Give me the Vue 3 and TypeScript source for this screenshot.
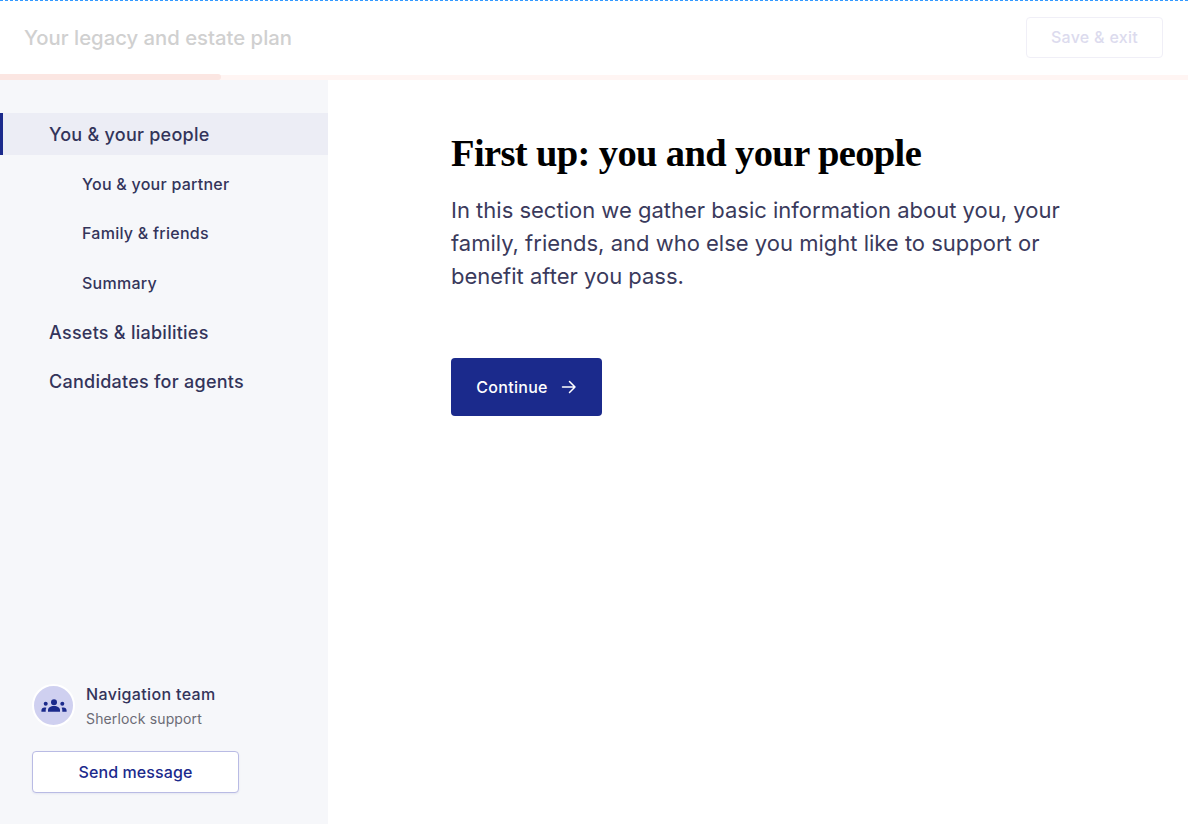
<script setup lang="ts">
interface NavItem { label: string; sub?: boolean; active?: boolean }
const items: NavItem[] = [
  { label: 'You & your people', active: true },
  { label: 'You & your partner', sub: true },
  { label: 'Family & friends', sub: true },
  { label: 'Summary', sub: true },
  { label: 'Assets & liabilities' },
  { label: 'Candidates for agents' },
]
</script>

<template>
  <div class="page">
    <header class="top">
      <span class="plan">Your legacy and estate plan</span>
      <button class="save">Save &amp; exit</button>
    </header>
    <div class="track"><div class="fill"></div></div>
    <div class="body">
      <aside class="side">
        <nav class="nav">
          <a v-for="i in items" :key="i.label" class="item" :class="{ sub: i.sub, active: i.active }">{{ i.label }}</a>
        </nav>
        <div class="team">
          <div class="who">
            <div class="avatar">
              <svg width="26" height="14" viewBox="0 0 26 14" fill="#1b2a8c">
                <circle cx="13" cy="3.200" r="3"/>
                <circle cx="4.700" cy="4.800" r="2"/>
                <circle cx="21.300" cy="4.800" r="2"/>
                <path d="M7 12.800v-1.500c0-2.600 2.400-4.300 6-4.300s6 1.700 6 4.300v1.500z"/>
                <path d="M.4 12.800v-1.200c0-2 1.400-3.200 3-3.200.8 0 1.500.1 2 .4-.5.8-.7 1.800-.7 2.800v1.200z"/>
                <path d="M25.600 12.800v-1.200c0-2-1.400-3.200-3-3.200-.8 0-1.500.1-2 .4.500.8.7 1.800.7 2.800v1.200z"/>
              </svg>
            </div>
            <div class="names">
              <div class="nm">Navigation team</div>
              <div class="role">Sherlock support</div>
            </div>
          </div>
          <button class="send">Send message</button>
        </div>
      </aside>
      <main class="main">
        <h1>First up: you and your people</h1>
        <p>In this section we gather basic information about you, your family, friends, and who else you might like to support or benefit after you pass.</p>
        <button class="cont">
          Continue
          <svg width="16" height="14" viewBox="0 0 16 14" fill="none" stroke="#fff" stroke-width="1.500" stroke-linecap="round" stroke-linejoin="round">
            <path d="M1.500 7h12.500M8.500 1.500 14 7l-5.500 5.500"/>
          </svg>
        </button>
      </main>
    </div>
  </div>
</template>

<style>
html, body { margin: 0; background: #fff; }
</style>

<style scoped>
.page {
  width: 1188px;
  height: 824px;
  display: flex;
  flex-direction: column;
  overflow: hidden;
  font-family: Inter, "Liberation Sans", sans-serif;
  border-top: 1px dashed #3399ff;
  box-sizing: border-box;
}
.top {
  height: 74px;
  display: flex;
  align-items: center;
  justify-content: space-between;
  padding: 0 25px 2px 24px;
  box-sizing: border-box;
}
.plan { font-size: 20.300px; font-weight: 500; color: #d0d0d0; }
.save {
  width: 137px;
  height: 41px;
  border: 1px solid #f0eff7;
  border-radius: 4px;
  background: #fff;
  color: #dcdbee;
  font: 500 16px Inter, sans-serif;
  letter-spacing: .3px;
}
.track { height: 5px; background: #fff5f3; flex: none; }
.fill { width: 221px; height: 6px; margin-top: -1px; background: #fbe6e2; border-radius: 0 3px 3px 0; }
.body { flex: 1; display: flex; min-height: 0; }
.side {
  width: 328px;
  background: #f6f7fa;
  display: flex;
  flex-direction: column;
  justify-content: space-between;
  padding: 33px 0 31px;
  box-sizing: border-box;
}
.nav { display: flex; flex-direction: column; gap: 7.500px; }
.item {
  height: 42px;
  display: flex;
  align-items: center;
  padding-left: 49px;
  font-size: 18px;
  font-weight: 500;
  color: #33345a;
  box-sizing: border-box;
  letter-spacing: .25px;
}
.item.sub { padding-left: 82px; font-size: 16px; }
.item.active { background: #ecedf5; border-left: 3px solid #1b2a8c; padding-left: 46px; }
.team { padding-left: 32px; display: flex; flex-direction: column; gap: 24px; }
.who { display: flex; align-items: center; gap: 11px; }
.avatar {
  width: 39px;
  height: 39px;
  border-radius: 50%;
  border: 2px solid #fff;
  background: #cfd0f0;
  display: flex;
  align-items: center;
  justify-content: center;
}
.names { display: flex; flex-direction: column; gap: 6px; }
.nm { font-size: 16px; font-weight: 500; color: #33345a; letter-spacing: .35px; }
.role { font-size: 14px; color: #6b6b75; letter-spacing: .15px; }
.send {
  width: 207px;
  height: 42px;
  background: #fff;
  border: 1px solid #b9bbe4;
  border-radius: 4px;
  box-shadow: 0 1px 2px rgba(27, 42, 140, .08);
  color: #1b2a8c;
  font: 500 16px Inter, sans-serif;
  letter-spacing: .1px;
}
.main { flex: 1; padding: 50px 0 0 123px; box-sizing: border-box; }
h1 {
  margin: 0;
  font-family: "Liberation Serif", serif;
  font-size: 38.500px;
  line-height: 46px;
  letter-spacing: -.62px;
  font-weight: 700;
  color: #000;
}
p {
  margin: 18px 0 0;
  width: 640px;
  font-size: 22px;
  line-height: 33px;
  color: #3a3a5c;
}
.cont {
  margin-top: 65px;
  width: 151px;
  height: 58px;
  background: #1b2a8c;
  border: none;
  border-radius: 4px;
  color: #fff;
  font: 500 16px Inter, sans-serif;
  letter-spacing: .3px;
  display: flex;
  align-items: center;
  justify-content: center;
  gap: 13px;
}
</style>
